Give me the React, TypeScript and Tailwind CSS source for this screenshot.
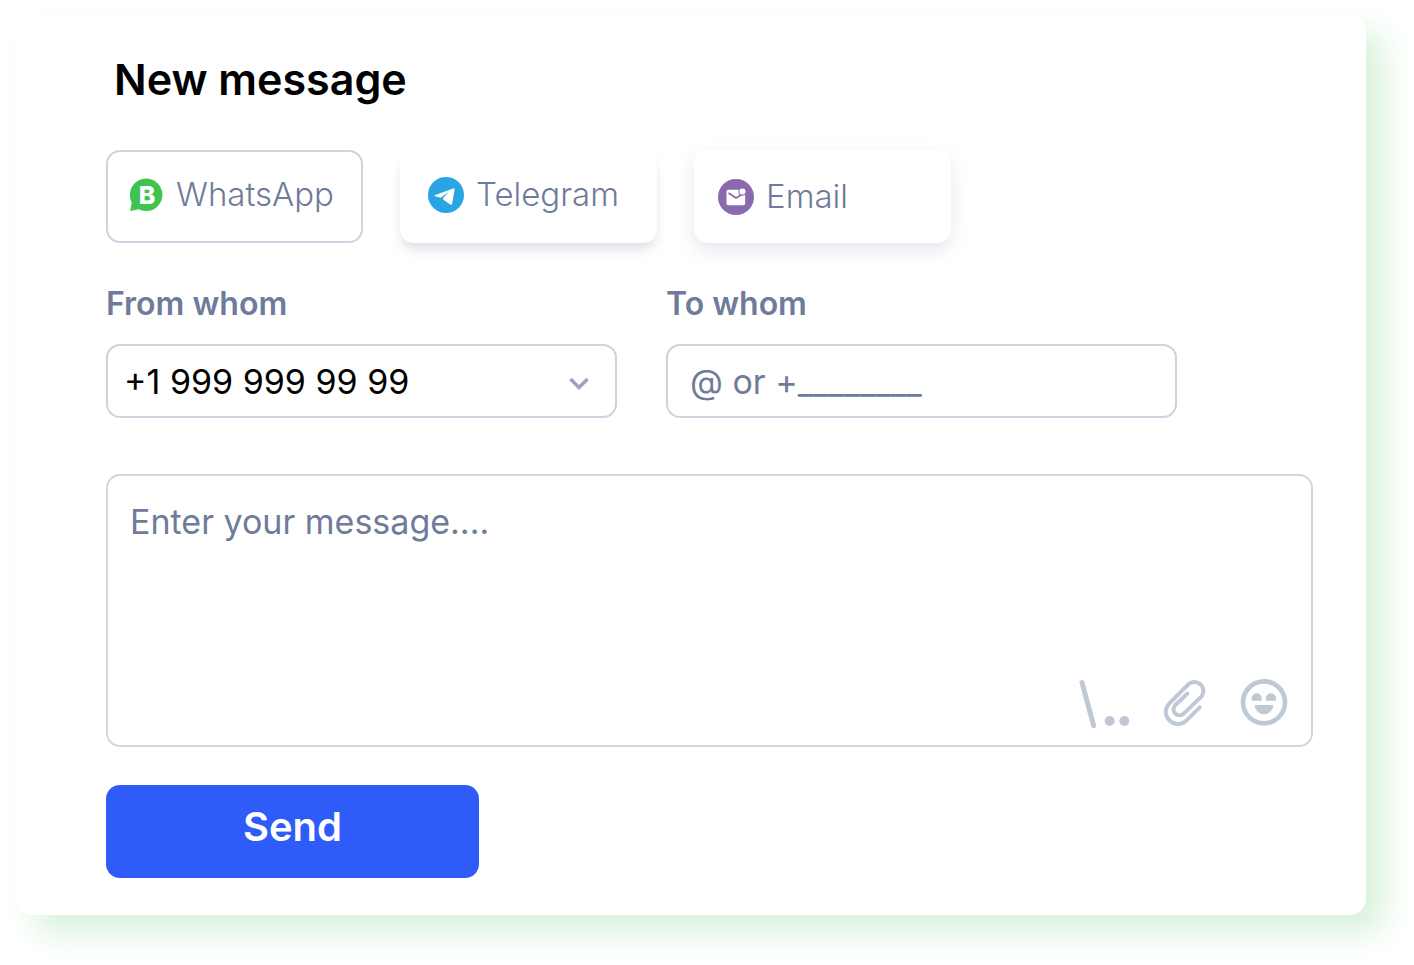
import { useState } from "react";
import type { ReactNode } from "react";

function WhatsAppIcon() {
  return (
    <svg viewBox="0 0 34 34" className="h-[34px] w-[34px]" aria-hidden="true">
      <path
        d="M16.500.5a16.300 16.300 0 1 1-7.800 30.800L.1 33l1.700-8.500A16.300 16.300 0 0 1 16.500.5Z"
        fill="#40c351"
      />
      <text
        x="17"
        y="25.500"
        textAnchor="middle"
        fill="#fff"
        className="font-['Inter',sans-serif] text-[25px] font-extrabold"
      >
        B
      </text>
    </svg>
  );
}

function TelegramIcon() {
  return (
    <svg viewBox="144 141 106 106" className="h-9 w-9" aria-hidden="true">
      <circle cx="197" cy="194" r="53" fill="#29a5e3" />
      <path
        d="M166 194 218 175q5-1 4 4l-7 41q-1 5-6 2l-20-15q-2-2 0-4l17-18-25 17-16-4q-5-1 0-4Z"
        fill="#fff"
      />
    </svg>
  );
}

function EmailIcon() {
  return (
    <svg viewBox="113 148 106 106" className="h-9 w-9" aria-hidden="true">
      <circle cx="166" cy="201" r="53" fill="#8a69af" />
      <rect x="138" y="180" width="55" height="45" rx="5" fill="#fff" />
      <path d="m144 189 22 15 22-13" fill="none" stroke="#8a69af" strokeWidth="5" />
      <circle cx="185" cy="185" r="12" fill="#8a69af" />
      <circle cx="185" cy="185" r="9" fill="#fff" />
    </svg>
  );
}

function TemplateIcon() {
  return (
    <svg viewBox="55 54 156 150" className="h-[50px] w-[52px]" aria-hidden="true">
      <path d="m67 68 35 129" stroke="currentColor" strokeWidth="15" strokeLinecap="round" />
      <circle cx="150" cy="183" r="15" fill="currentColor" />
      <circle cx="194" cy="183" r="15" fill="currentColor" />
    </svg>
  );
}

function ClipIcon() {
  return (
    <svg viewBox="306 54 138 150" className="h-[50px] w-[46px]" aria-hidden="true">
      <path
        d="m419 142-39 39a36 36 0 0 1-52-51l58-58a27 27 0 0 1 38 38l-53 51a18 18 0 0 1-25-26l36-34"
        fill="none"
        stroke="currentColor"
        strokeWidth="12"
        strokeLinecap="round"
      />
    </svg>
  );
}

function SmileIcon() {
  return (
    <svg viewBox="541 54 144 150" className="h-[50px] w-12" aria-hidden="true">
      <circle cx="613" cy="127" r="63" fill="none" stroke="currentColor" strokeWidth="14" />
      <path
        d="M576 122v-7a15 15 0 0 1 30 0v7ZM619 122v-7a15 15 0 0 1 30 0v7ZM585 135h56a28 28 0 0 1-56 0Z"
        fill="currentColor"
      />
    </svg>
  );
}

type Channel = { name: string; icon: ReactNode; look: string };

const channels: Channel[] = [
  { name: "WhatsApp", icon: <WhatsAppIcon />, look: "border-[#cfd2e0] pb-1 pl-[22px]" },
  {
    name: "Telegram",
    icon: <TelegramIcon />,
    look: "border-transparent pb-1 pl-[26px] shadow-[0_8px_12px_-2px_rgba(100,110,140,0.22)]",
  },
  {
    name: "Email",
    icon: <EmailIcon />,
    look: "border-transparent pl-[22px] shadow-[0_7px_18px_rgba(100,110,140,0.17)]",
  },
];

const fieldBox =
  "h-[74px] w-full rounded-[14px] border-2 border-[#cfd2e0] bg-white text-[34px] outline-none";

export default function App() {
  const [channel, setChannel] = useState("WhatsApp");

  return (
    <main className="bg-white pt-3.5 pr-12 pb-[50px] pl-4 font-['Inter',sans-serif]">
      <form
        onSubmit={(e) => e.preventDefault()}
        className="rounded-2xl bg-white pt-9 pr-[53px] pb-[37px] pl-[90px] shadow-[18px_18px_32px_#d8f2da]"
      >
        <h1 className="pl-2 text-[43px] leading-[58px] font-semibold text-black">New message</h1>

        <div className="mt-[42px] flex flex-wrap gap-[37px]" role="group" aria-label="Channel">
          {channels.map((c) => (
            <button
              key={c.name}
              type="button"
              aria-pressed={channel === c.name}
              onClick={() => setChannel(c.name)}
              className={`flex h-[93px] w-[257px] items-center gap-3 rounded-[14px] border-2 bg-white text-[33px] font-light text-[#6f7b9b] ${c.look}`}
            >
              {c.icon}
              {c.name}
            </button>
          ))}
        </div>

        <div className="mt-10 grid max-w-[1071px] grid-cols-2 gap-[49px]">
          <div>
            <label htmlFor="from" className="block text-[32px] leading-[42px] font-semibold text-[#6f7b9b]">
              From whom
            </label>
            <div className="relative mt-[19px]">
              <select id="from" className={`${fieldBox} appearance-none pr-14 pl-4 text-black`}>
                <option>+1 999 999 99 99</option>
              </select>
              <svg
                viewBox="0 0 20 14"
                className="pointer-events-none absolute top-[33px] right-7 h-3.5 w-5"
                aria-hidden="true"
              >
                <path d="m1.500 2 8.500 8.500L18.500 2" fill="none" stroke="#9ba3ba" strokeWidth="3.500" />
              </svg>
            </div>
          </div>
          <div>
            <label htmlFor="to" className="block text-[32px] leading-[42px] font-semibold text-[#6f7b9b]">
              To whom
            </label>
            <input
              id="to"
              type="text"
              placeholder="@ or +________"
              className={`${fieldBox} mt-[19px] px-[22px] text-[#6f7b9b] placeholder:text-[#6f7b9b]`}
            />
          </div>
        </div>

        <div className="relative mt-14 flex">
          <textarea
            aria-label="Message"
            placeholder="Enter your message...."
            className="h-[273px] w-full resize-none rounded-[14px] border-2 border-[#d3d6e2] bg-white px-[22px] pt-6 text-[34px] leading-[44px] text-[#6f7b9b] outline-none placeholder:text-[#6f7b9b]"
          />
          <div className="absolute right-[25px] bottom-[19px] flex gap-8 text-[#c0c7d5]">
            <button type="button" aria-label="Templates">
              <TemplateIcon />
            </button>
            <button type="button" aria-label="Attach file">
              <ClipIcon />
            </button>
            <button type="button" aria-label="Emoji">
              <SmileIcon />
            </button>
          </div>
        </div>

        <button
          type="submit"
          className="mt-[38px] h-[93px] w-[373px] rounded-[14px] bg-[#2f5bf8] pb-2.5 text-[40px] font-semibold text-white"
        >
          Send
        </button>
      </form>
    </main>
  );
}
